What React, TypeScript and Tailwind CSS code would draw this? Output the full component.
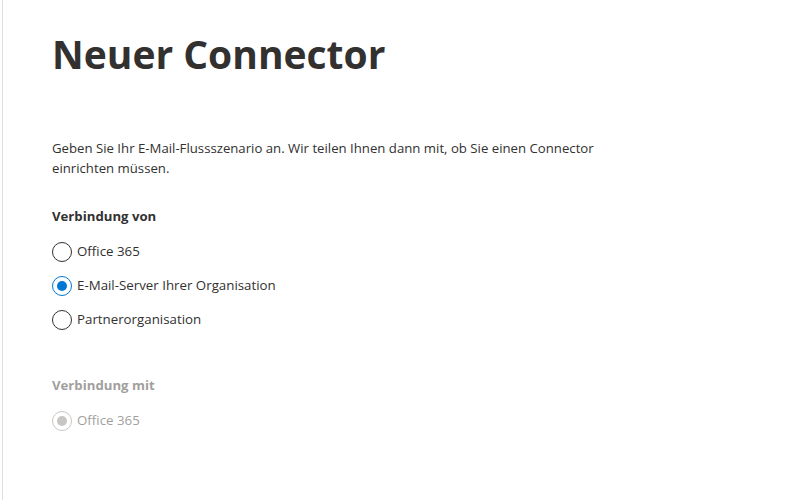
import { useState } from "react";

type Option = { id: string; label: string };

const sourceOptions: Option[] = [
  { id: "o365", label: "Office 365" },
  { id: "org", label: "E-Mail-Server Ihrer Organisation" },
  { id: "partner", label: "Partnerorganisation" },
];

function Radio({
  label,
  checked,
  disabled,
  onSelect,
}: {
  label: string;
  checked: boolean;
  disabled?: boolean;
  onSelect?: () => void;
}) {
  const ring = disabled
    ? "border-[#c8c6c4]"
    : checked
      ? "border-[#0078d4]"
      : "border-[#323130]";
  const dot = disabled ? "bg-[#c8c6c4]" : "bg-[#0078d4]";
  return (
    <label
      className={`flex h-[34px] items-center gap-[5px] ${disabled ? "cursor-default text-[#a19f9d]" : "cursor-pointer text-[#323130]"}`}
      onClick={() => !disabled && onSelect?.()}
    >
      <span
        className={`flex h-5 w-5 items-center justify-center rounded-full border bg-white ${ring}`}
      >
        {checked && <span className={`h-[10px] w-[10px] rounded-full ${dot}`} />}
      </span>
      <span className="text-[13.3px]">{label}</span>
    </label>
  );
}

export default function App() {
  const [source, setSource] = useState("org");

  return (
    <div className="h-[500px] w-[795px] bg-white font-['Open_Sans',sans-serif]">
      <div className="ml-[2px] h-full border-l border-[#e1dfdd] pl-[49px] pt-[28px]">
        <h1 className="text-[39px] font-bold leading-[52px] text-[#323130]">
          Neuer Connector
        </h1>
        <p className="mt-[58px] w-[570px] text-[13.2px] leading-[20px] text-[#323130]">
          Geben Sie Ihr E-Mail-Flussszenario an. Wir teilen Ihnen dann mit, ob
          Sie einen Connector einrichten müssen.
        </p>
        <div className="mt-[28px]">
          <div className="text-[13.2px] font-bold leading-[20px] text-[#323130]">
            Verbindung von
          </div>
          <div className="mt-[9px] flex flex-col">
            {sourceOptions.map((o) => (
              <Radio
                key={o.id}
                label={o.label}
                checked={source === o.id}
                onSelect={() => setSource(o.id)}
              />
            ))}
          </div>
        </div>
        <div className="mt-[38px]">
          <div className="text-[13.2px] font-bold leading-[20px] text-[#a19f9d]">
            Verbindung mit
          </div>
          <div className="mt-[9px] flex flex-col">
            <Radio label="Office 365" checked disabled />
          </div>
        </div>
      </div>
    </div>
  );
}
